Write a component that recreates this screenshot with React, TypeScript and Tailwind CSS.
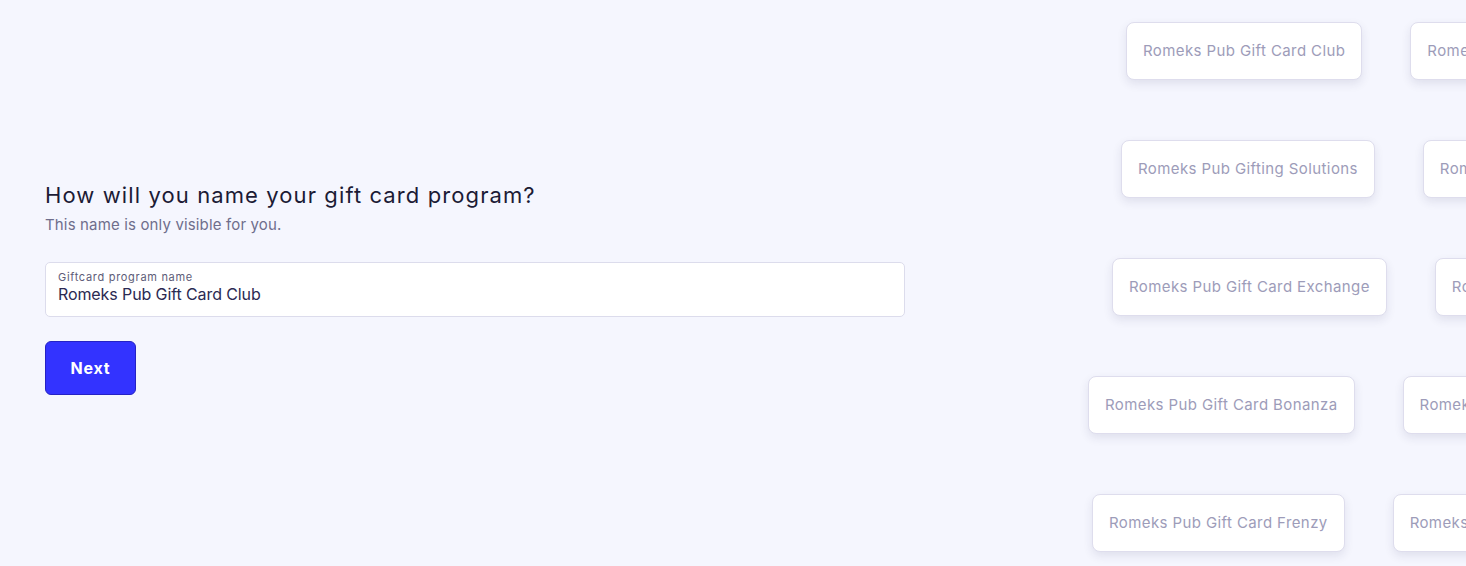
import React from "react";

const rows = [
    { offset: "ml-[66px]", names: ["Romeks Pub Gift Card Club", "Romeks Pub Gift Hub"] },
    { offset: "ml-[61px]", names: ["Romeks Pub Gifting Solutions", "Romeks Pub Gift Vault"] },
    { offset: "ml-[52px]", names: ["Romeks Pub Gift Card Exchange", "Romeks Pub Gift Corner"] },
    { offset: "ml-[28px]", names: ["Romeks Pub Gift Card Bonanza", "Romeks Pub Gift Spot"] },
    { offset: "ml-[32px]", names: ["Romeks Pub Gift Card Frenzy", "Romeks Pub Gift Zone"] },
];

export default function App() {
    return (
        <div className="flex h-[566px] w-full overflow-hidden bg-[#f5f6fe] font-['Inter',sans-serif]">
            {/* Form */}
            <div className="flex-none pl-[45px] pt-[181px] w-[1060px]">
                <h1 className="text-[22px] leading-[28px] tracking-[1.1px] text-[#1c1b35]">How will you name your gift card program?</h1>
                <p className="mt-[6px] text-[15px] leading-[20px] tracking-[0.15px] text-[#6f6e8c]">This name is only visible for you.</p>

                <div className="mt-[27px] w-[860px] h-[55px] rounded-[5px] border border-[#dcdcec] bg-white px-[12px] pt-[8px]">
                    <div className="text-[11px] leading-[13px] tracking-[0.7px] text-[#5d5c78]">Giftcard program name</div>
                    <div className="text-[16px] leading-[20px] tracking-[-0.1px] text-[#2b2a52]">Romeks Pub Gift Card Club</div>
                </div>

                <button className="mt-[24px] w-[91px] h-[54px] rounded-[6px] border border-[#2522c4] bg-[#3333ff] text-white text-[16px] font-bold tracking-[0.8px]">
                    Next
                </button>
            </div>

            {/* Name suggestions */}
            <div className="flex-1 overflow-hidden pt-[22px] flex flex-col gap-[60px]">
                {rows.map((row, i) => (
                    <div key={i} className={`flex gap-[48px] whitespace-nowrap ${row.offset}`}>
                        {row.names.map((name) => (
                            <div
                                key={name}
                                className="flex-none h-[58px] flex items-center px-[16px] rounded-[8px] border border-[#dedded] bg-white text-[15px] tracking-[0.4px] text-[#9d9cb9] shadow-[0_4px_10px_rgba(40,40,90,0.10)]"
                            >
                                {name}
                            </div>
                        ))}
                    </div>
                ))}
            </div>
        </div>
    );
}
